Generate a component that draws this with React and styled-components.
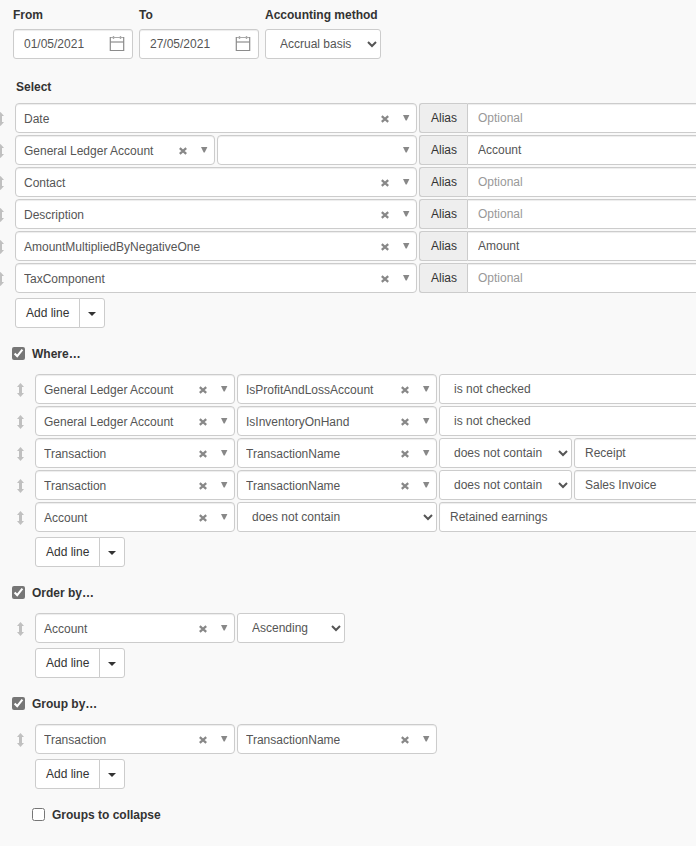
import React from "react";
import styled, { createGlobalStyle } from "styled-components";

const selectLines = [
  { fields: ["Date"] },
  { fields: ["General Ledger Account", ""], alias: "Account" },
  { fields: ["Contact"] },
  { fields: ["Description"] },
  { fields: ["AmountMultipliedByNegativeOne"], alias: "Amount" },
  { fields: ["TaxComponent"] },
];

const whereLines = [
  {
    fields: ["General Ledger Account", "IsProfitAndLossAccount"],
    operator: "is not checked",
  },
  {
    fields: ["General Ledger Account", "IsInventoryOnHand"],
    operator: "is not checked",
  },
  {
    fields: ["Transaction", "TransactionName"],
    operator: "does not contain",
    value: "Receipt",
  },
  {
    fields: ["Transaction", "TransactionName"],
    operator: "does not contain",
    value: "Sales Invoice",
  },
  {
    fields: ["Account"],
    operator: "does not contain",
    value: "Retained earnings",
  },
];

const CalendarIcon = () => (
  <svg width="16" height="16" viewBox="0 0 16 16" fill="none" aria-hidden="true">
    <path d="M1 6h14" stroke="#bbb" strokeWidth="2" />
    <path d="M1 1.5h14" stroke="#aaa" />
    <path d="M1.3 1v13.5h13.4V1" stroke="#8c8c8c" strokeWidth="1.2" />
    <path d="M4.5 0v3M11.5 0v3" stroke="#aaa" strokeWidth="1.4" />
  </svg>
);

const HandleIcon = () => (
  <svg width="8" height="14" viewBox="0 0 8 14" aria-hidden="true">
    <path d="M4.5 0L8 4H6v6h2l-3.5 4L1 10h2V4H1z" fill="#c0c0c0" />
  </svg>
);

const ClearIcon = () => (
  <svg width="8" height="8" viewBox="0 0 8 8" aria-hidden="true">
    <path d="M.8 1.2l6.4 5.6M7.2 1.2L.8 6.8" stroke="#888" strokeWidth="2.3" />
  </svg>
);

const Combo = ({ value, label, width }) => (
  <ComboBox $width={width}>
    <ComboSelect aria-label={label} defaultValue={value}>
      <option>{value}</option>
    </ComboSelect>
    {value && (
      <ClearButton type="button" aria-label="Clear">
        <ClearIcon />
      </ClearButton>
    )}
    <ComboArrow viewBox="0 0 7 6" aria-hidden="true">
      <path d="M0 0h6.4L3.7 5.5h-1z" fill="#888" />
    </ComboArrow>
  </ComboBox>
);

const AddLine = () => (
  <ButtonGroup>
    <Button type="button">Add line</Button>
    <Button type="button" aria-label="More options">
      <Caret />
    </Button>
  </ButtonGroup>
);

const Line = ({ children }) => (
  <LineRow>
    <Handle>
      <HandleIcon />
    </Handle>
    {children}
  </LineRow>
);

const DateField = ({ id, label, value }) => (
  <div>
    <Label htmlFor={id}>{label}</Label>
    <DateBox>
      <Input id={id} defaultValue={value} />
      <CalendarButton type="button" aria-label={`Choose ${label} date`}>
        <CalendarIcon />
      </CalendarButton>
    </DateBox>
  </div>
);

const App = () => {
  return (
    <Page>
      <GlobalStyle />
      <Filters>
        <DateField id="from" label="From" value="01/05/2021" />
        <DateField id="to" label="To" value="27/05/2021" />
        <div>
          <Label htmlFor="method">Accounting method</Label>
          <Select id="method" $width="116px">
            <option>Accrual basis</option>
            <option>Cash basis</option>
          </Select>
        </div>
      </Filters>

      <SelectHeading>Select</SelectHeading>
      <Lines $outdent>
        {selectLines.map(({ fields, alias }, i) => (
          <Line key={i}>
            {fields.map((field, n) => (
              <Combo
                key={n}
                value={field}
                label="Field"
                width={fields.length > 1 ? "200px" : "402px"}
              />
            ))}
            <AliasGroup>
              <Addon htmlFor={`alias-${i}`}>Alias</Addon>
              <Input
                id={`alias-${i}`}
                placeholder="Optional"
                defaultValue={alias}
              />
            </AliasGroup>
          </Line>
        ))}
        <AddLine />
      </Lines>

      <CheckLabel>
        <input type="checkbox" defaultChecked />
        Where…
      </CheckLabel>
      <Lines>
        {whereLines.map(({ fields, operator, value }, i) => (
          <Line key={i}>
            {fields.map((field, n) => (
              <Combo key={n} value={field} label="Field" width="200px" />
            ))}
            <Select
              aria-label="Operator"
              $grow={!value}
              $width={fields.length > 1 ? "133px" : "200px"}
            >
              <option>{operator}</option>
            </Select>
            {value && <Input aria-label="Value" defaultValue={value} />}
          </Line>
        ))}
        <AddLine />
      </Lines>

      <CheckLabel>
        <input type="checkbox" defaultChecked />
        Order by…
      </CheckLabel>
      <Lines>
        <Line>
          <Combo value="Account" label="Field" width="200px" />
          <Select aria-label="Direction" $width="108px">
            <option>Ascending</option>
            <option>Descending</option>
          </Select>
        </Line>
        <AddLine />
      </Lines>

      <CheckLabel>
        <input type="checkbox" defaultChecked />
        Group by…
      </CheckLabel>
      <Lines>
        <Line>
          <Combo value="Transaction" label="Field" width="200px" />
          <Combo value="TransactionName" label="Field" width="200px" />
        </Line>
        <AddLine />
      </Lines>

      <CheckLabel $nested>
        <input type="checkbox" />
        Groups to collapse
      </CheckLabel>
    </Page>
  );
};

const GlobalStyle = createGlobalStyle`
  * {
    box-sizing: border-box;
  }
  body {
    margin: 0;
    background-color: #f9f9f9;
    color: #333;
    font: 12px/18px "Liberation Sans", Arial, sans-serif;
  }
  input, select, button {
    font: inherit;
    margin: 0;
  }
`;
const Page = styled.main`
  padding: 6px 0 22px;
  overflow-x: hidden;
`;
const Filters = styled.div`
  display: flex;
  gap: 6px;
  padding-left: 13px;
`;
const Label = styled.label`
  display: block;
  margin-bottom: 5px;
  font-weight: bold;
`;
const Input = styled.input`
  flex: 1;
  min-width: 0;
  height: 30px;
  padding: 0 10px 1px;
  border: 1px solid #ccc;
  border-radius: 3px;
  background-color: #fff;
  color: #555;
  box-shadow: inset 0 1px 1px rgba(0, 0, 0, 0.075);
  &::placeholder {
    color: #999;
  }
`;
const Select = styled.select`
  flex: ${(props) => (props.$grow ? "1" : "none")};
  width: ${(props) => props.$width};
  height: 30px;
  padding: 0 2px 1px 10px;
  border: 1px solid #ccc;
  border-radius: 3px;
  background-color: #fff;
  color: #555;
`;
const DateBox = styled.div`
  position: relative;
  display: flex;
  width: 120px;
`;
const CalendarButton = styled.button`
  position: absolute;
  top: 7px;
  right: 8px;
  display: flex;
  padding: 0;
  border: none;
  background: none;
`;
const SelectHeading = styled.h2`
  margin: 19px 0 7px 16px;
  font-size: 12px;
  line-height: 18px;
`;
/* Lines run past the right edge of the page */
const Lines = styled.div`
  display: flex;
  flex-direction: column;
  gap: 2px;
  margin-left: ${(props) => (props.$outdent ? "-15px" : "5px")};
  margin-right: -20px;
`;
const LineRow = styled.div`
  display: flex;
  gap: 2px;
`;
const Handle = styled.span`
  display: flex;
  flex: none;
  align-items: center;
  justify-content: center;
  width: 30px;
  margin-right: -2px;
  padding-top: 2px;
  cursor: move;
`;
const ComboBox = styled.div`
  position: relative;
  flex: none;
  width: ${(props) => props.$width};
`;
const ComboSelect = styled.select`
  appearance: none;
  display: block;
  width: 100%;
  height: 30px;
  padding: 1px 40px 0 8px;
  border: 1px solid #ccc;
  border-radius: 4px;
  background-color: #fff;
  color: #555;
  box-shadow: inset 0 1px 1px rgba(0, 0, 0, 0.075);
`;
const ClearButton = styled.button`
  position: absolute;
  top: 12px;
  right: 28px;
  display: flex;
  padding: 0;
  border: none;
  background: none;
`;
const ComboArrow = styled.svg`
  position: absolute;
  top: 12px;
  right: 7px;
  width: 7px;
  height: 6px;
  pointer-events: none;
`;
const AliasGroup = styled.div`
  display: flex;
  flex: 1;
  ${Input} {
    border-radius: 0 3px 3px 0;
  }
`;
const Addon = styled.label`
  height: 30px;
  padding: 5px 10px 5px 11px;
  border: 1px solid #ccc;
  border-right: none;
  border-radius: 3px 0 0 3px;
  background-color: #eee;
`;
const ButtonGroup = styled.div`
  display: flex;
  margin: 3px 0 0 30px;
`;
const Button = styled.button`
  display: flex;
  align-items: center;
  height: 30px;
  padding: 0 10px;
  border: 1px solid #ccc;
  border-radius: 3px 0 0 3px;
  background-color: #fff;
  color: #333;
  & + & {
    margin-left: -1px;
    padding: 2px 8px 0;
    border-radius: 0 3px 3px 0;
  }
`;
const Caret = styled.span`
  border: 4px solid transparent;
  border-top-color: #333;
  border-bottom: none;
`;
const CheckLabel = styled.label`
  display: flex;
  align-items: center;
  gap: 7px;
  width: fit-content;
  margin: 17px 0 11px ${(props) => (props.$nested ? "32px" : "12px")};
  font-weight: bold;
  input {
    width: 13px;
    height: 13px;
    margin-bottom: 2px;
    accent-color: #767676;
  }
`;

export default App;
